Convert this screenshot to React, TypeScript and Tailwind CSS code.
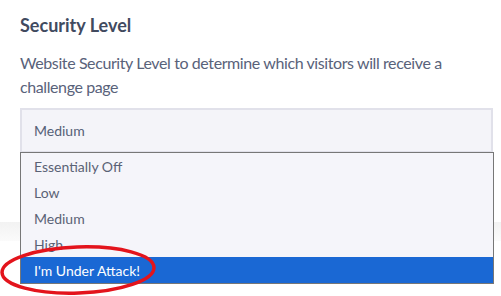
import React from "react";

export default function App() {
  const options = ["Essentially Off", "Low", "Medium", "High", "I'm Under Attack!"];
  return (
    <div
      className="relative w-[501px] h-[296px] overflow-hidden bg-white"
      style={{ fontFamily: "Lato, 'Noto Sans', sans-serif" }}
    >
      <div className="pl-[20px] pr-[8px] pt-[13px]">
        <h2 className="text-[18px] leading-[24px] font-bold text-[#414a5f]">Security Level</h2>
        <p className="mt-[14px] text-[16px] leading-[24px] text-[#59627a] tracking-[-0.4px]">
          Website Security Level to determine which visitors will receive a challenge page
        </p>
        <div className="mt-[9px] h-[45px] border-2 border-[#e1e1ea] bg-[#f4f4f9] flex items-center pl-[12px] text-[14px] text-[#556077]">
          Medium
        </div>
      </div>
      <div className="mt-[69px] h-[19px] bg-gradient-to-b from-[#f2f2f2] to-[#fbfbfb]" />

      <div className="absolute left-[20px] top-[152px] w-[474px] border border-[#777777] bg-[#f5f5fa]">
        {options.map((o, i) => (
          <div
            key={o}
            className={
              i === 4
                ? "h-[26px] pl-[13px] flex items-center text-[14px] bg-[#1a68d4] text-white"
                : "h-[26px] pl-[13px] flex items-center text-[14px] text-[#5a6275]"
            }
          >
            {o}
          </div>
        ))}
      </div>

      <svg className="absolute left-0 top-[240px]" width="170" height="56" viewBox="0 0 170 56">
        <ellipse
          cx="78"
          cy="30"
          rx="76"
          ry="23"
          fill="none"
          stroke="#e3141c"
          strokeWidth="3.5"
          transform="rotate(-2 78 30)"
        />
      </svg>
    </div>
  );
}
